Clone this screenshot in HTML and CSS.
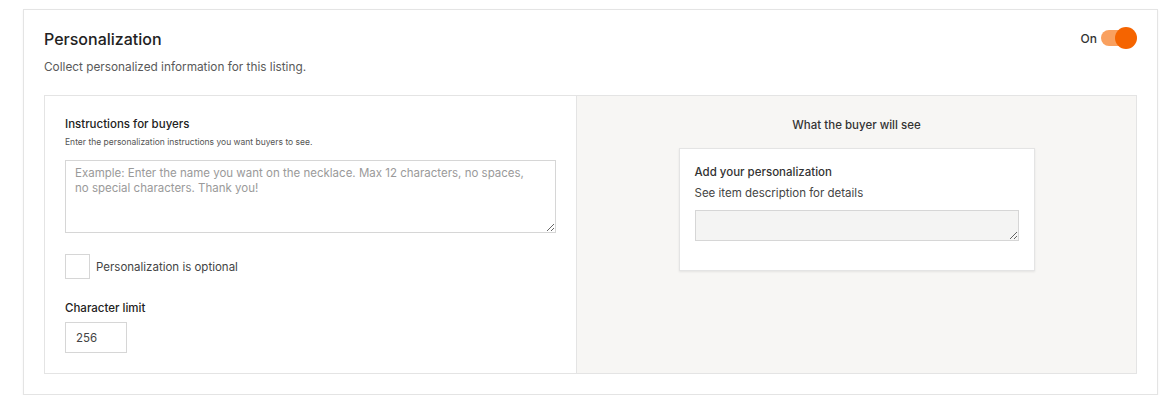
FILE: index.html
```html
<!DOCTYPE html>
<html lang="en">
<head>
  <meta charset="UTF-8">
  <title>Personalization</title>
  <link rel="stylesheet" href="styles.css">
</head>
<body>
  <div class="card">
    <div class="card-head">
      <div>
        <h2>Personalization</h2>
        <p class="sub">Collect personalized information for this listing.</p>
      </div>
      <label class="toggle">
        <span>On</span>
        <span class="track"><span class="knob"></span></span>
      </label>
    </div>

    <div class="panels">
      <div class="left">
        <label class="field-label" for="instr">Instructions for buyers</label>
        <p class="hint">Enter the personalization instructions you want buyers to see.</p>
        <textarea id="instr" class="instr" placeholder="Example: Enter the name you want on the necklace. Max 12 characters, no spaces, no special characters. Thank you!"></textarea>

        <label class="check">
          <span class="box"></span>
          Personalization is optional
        </label>

        <label class="field-label" for="limit">Character limit</label>
        <input id="limit" class="limit" type="text" value="256">
      </div>

      <div class="right">
        <div class="preview-title">What the buyer will see</div>
        <div class="preview">
          <div class="p-title">Add your personalization</div>
          <div class="p-sub">See item description for details</div>
          <textarea class="p-input"></textarea>
        </div>
      </div>
    </div>
  </div>
</body>
</html>
```

FILE: styles.css
```css
body {
  margin: 0;
  background: #ffffff;
  font-family: Inter, "Open Sans", sans-serif;
  color: #222222;
}

.card {
  margin: 9px 0 0 23px;
  width: 1093px;
  border: 1px solid #e4e4e4;
  padding: 19px 20px 20px 20px;
  box-shadow: 0 1px 2px rgba(0, 0, 0, 0.06);
}

.card-head {
  display: flex;
  justify-content: space-between;
  align-items: flex-start;
}

h2 {
  margin: 0;
  font-size: 16px;
  font-weight: 500;
  line-height: 20px;
}

.sub {
  margin: 10px 0 0;
  font-size: 11.8px;
  color: #595959;
  line-height: 16px;
}

.toggle {
  display: flex;
  align-items: center;
  gap: 4px;
  font-size: 12px;
  font-weight: 500;
  color: #333;
  margin-top: 1px;
  margin-right: 2px;
}

.track {
  position: relative;
  width: 34px;
  height: 16px;
  border-radius: 8px;
  background: #f9a05f;
}

.knob {
  position: absolute;
  right: -2px;
  top: -3px;
  width: 22px;
  height: 22px;
  border-radius: 50%;
  background: #f56400;
}

.panels {
  margin-top: 20px;
  display: grid;
  grid-template-columns: 532px 1fr;
  border: 1px solid #e4e4e4;
  height: 277px;
}

.left {
  padding: 20px 20px 0 20px;
  border-right: 1px solid #e4e4e4;
}

.field-label {
  display: block;
  font-size: 11.5px;
  font-weight: 500;
  color: #222;
  line-height: 16px;
}

.hint {
  margin: 4px 0 0;
  font-size: 8.5px;
  color: #555;
  line-height: 12px;
}

.instr {
  display: block;
  box-sizing: border-box;
  margin-top: 12px;
  width: 491px;
  height: 73px;
  border: 1px solid #d6d6d6;
  padding: 5px 30px 5px 9px;
  font-family: inherit;
  font-size: 11.5px;
  line-height: 15px;
  resize: vertical;
}

.instr::placeholder {
  color: #9a9a9a;
}

.check {
  display: flex;
  align-items: center;
  gap: 6px;
  margin-top: 21px;
  font-size: 11.5px;
  color: #444;
}

.box {
  width: 23px;
  height: 23px;
  border: 1px solid #d6d6d6;
  background: #fff;
}

.check + .field-label {
  margin-top: 21px;
}

.limit {
  display: block;
  box-sizing: border-box;
  margin-top: 6px;
  width: 62px;
  height: 31px;
  border: 1px solid #d6d6d6;
  padding: 0 10px;
  font-family: inherit;
  font-size: 11.5px;
  color: #444;
}

.right {
  background: #f7f6f4;
  display: flex;
  flex-direction: column;
  align-items: center;
  padding-top: 21px;
}

.preview-title {
  font-size: 11.5px;
  font-weight: 500;
  color: #333;
  line-height: 16px;
}

.preview {
  margin-top: 15px;
  width: 324px;
  background: #fff;
  border: 1px solid #e4e4e4;
  box-shadow: 0 1px 2px rgba(0, 0, 0, 0.08);
  padding: 15px 15px 29px 15px;
}

.p-title {
  font-size: 11.5px;
  font-weight: 500;
  color: #333;
  line-height: 16px;
}

.p-sub {
  margin-top: 5px;
  font-size: 11.5px;
  color: #444;
  line-height: 16px;
}

.p-input {
  display: block;
  box-sizing: border-box;
  margin-top: 9px;
  width: 100%;
  height: 31px;
  border: 1px solid #d6d6d6;
  background: #f4f4f3;
  resize: vertical;
}
```
